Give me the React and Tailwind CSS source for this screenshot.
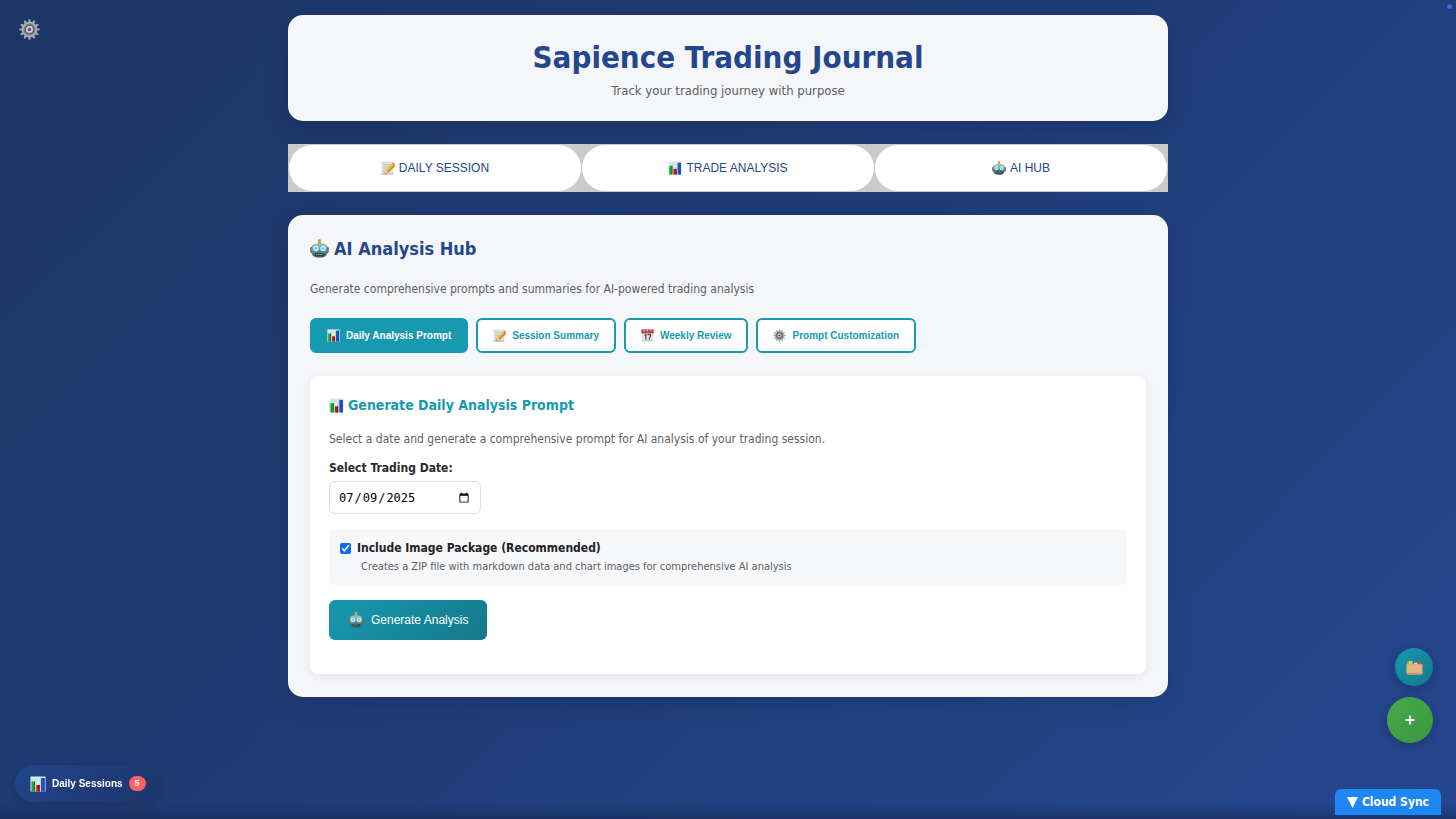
import { useId, useState } from "react";

function ChartIcon({ className }) {
  return (
    <svg viewBox="0 0 32 32" className={className} aria-hidden="true">
      <rect x="1" y="1" width="30" height="30" fill="#dbe8ef" />
      <path d="M1 8h30M1 16h30M1 24h30M11 1v30M21 1v30" stroke="#b9cbd6" strokeWidth="1" />
      <rect x="3" y="11" width="7" height="20" fill="#17a82c" />
      <rect x="8" y="11" width="2" height="20" fill="#0d7a1d" />
      <rect x="12.500" y="18" width="7" height="13" fill="#c4161c" />
      <rect x="17.500" y="18" width="2" height="13" fill="#8e0d12" />
      <rect x="22" y="4" width="7" height="27" fill="#1b55c4" />
      <rect x="27" y="4" width="2" height="27" fill="#123c90" />
    </svg>
  );
}

function MemoIcon({ className }) {
  return (
    <svg viewBox="0 0 32 32" className={className} aria-hidden="true">
      <path d="M1 1h27v30H1z" fill="#e3e3e3" />
      <path d="M1 28h27v3H1z" fill="#bdbdbd" />
      <path d="M5 8h17M5 12h13M5 16h10M5 20h8M5 24h14" stroke="#a9adb3" strokeWidth="1.200" />
      <path d="M8 29l3-9L25 6l6 6-15 15z" fill="#f4b92c" />
      <path d="M13 26L29 9l3 3-16 15z" fill="#c98613" />
      <path d="M25 6l2-2c2-1 6 2 5 4l-1 4z" fill="#e58a86" />
      <path d="M8 29l3-9 5 7z" fill="#ecd0a0" />
      <path d="M8 29l1-3 2 2z" fill="#3b3028" />
    </svg>
  );
}

function RobotIcon({ className }) {
  const id = useId();
  return (
    <svg viewBox="0 0 32 32" className={className} aria-hidden="true">
      <defs>
        <linearGradient id={id} x1="0" y1="0" x2="0" y2="1">
          <stop offset="0" stopColor="#9bcaca" />
          <stop offset="0.500" stopColor="#549aa0" />
          <stop offset="1" stopColor="#2c5661" />
        </linearGradient>
      </defs>
      <rect x="0.500" y="13" width="5" height="11" rx="2.500" fill="#a5403c" />
      <rect x="26.500" y="13" width="5" height="11" rx="2.500" fill="#a5403c" />
      <path d="M14 4h4l1 5h-6z" fill="#6fa3a6" />
      <circle cx="16" cy="3.200" r="3" fill="#f09a2a" />
      <path d="M3 13c1-5 7-6 13-6s12 1 13 6c1 6 1 13-3 16-4 3-16 3-20 0-4-3-4-10-3-16z" fill={`url(#${id})`} />
      <circle cx="10" cy="16" r="4.500" fill="#c9f4fa" />
      <circle cx="22" cy="16" r="4.500" fill="#c9f4fa" />
      <circle cx="10" cy="16" r="2.300" fill="#62cbe0" />
      <circle cx="22" cy="16" r="2.300" fill="#62cbe0" />
      <path d="M16 18l2.500 4h-5z" fill="#c2503f" />
      <rect x="8" y="24" width="16" height="4" rx="2" fill="#263d45" />
      <path d="M10 26h12" stroke="#9fb9bd" strokeWidth="1.500" strokeDasharray="2 1" />
    </svg>
  );
}

const teeth = [0, 30, 60, 90, 120, 150, 180, 210, 240, 270, 300, 330];

function GearIcon({ className }) {
  return (
    <svg viewBox="0 0 32 32" className={className} aria-hidden="true">
      {teeth.map((a) => (
        <path key={a} d="M14 5l.8-4.500h2.400L18 5z" fill="#a9adb1" transform={`rotate(${a} 16 16)`} />
      ))}
      <circle cx="16" cy="16" r="10.500" fill="#77797c" stroke="#a9adb1" strokeWidth="3" />
      <circle cx="16" cy="16" r="7" fill="#606266" />
      <circle cx="16" cy="16" r="4" fill="#55585c" stroke="#cfd2d5" strokeWidth="2.500" />
    </svg>
  );
}

function CalendarIcon({ className }) {
  return (
    <svg viewBox="0 0 32 32" className={className} aria-hidden="true">
      <path d="M2 2h28v28H2z" fill="#e4e4e2" />
      <path d="M1 1h30v10H1z" fill="#b9433f" />
      <path d="M6 1v4l3 2V1zM14 1v4l3 2V1zM23 1v4l3 2V1z" fill="#e7b5b1" />
      <path d="M2 28h28v2H2z" fill="#b5b5b3" />
      <path d="M9 16l3-2v12M16 14h8l-4 12" fill="none" stroke="#33363a" strokeWidth="2.500" />
    </svg>
  );
}

function FolderIcon({ className }) {
  return (
    <svg viewBox="0 0 32 32" className={className} aria-hidden="true">
      <path d="M2 6l2-2h8l2 3h14v6H2z" fill="#c89a63" />
      <path d="M6 4h7v5H6z" fill="#ecd23c" />
      <path d="M12 5h8v5h-8z" fill="#3e74c7" />
      <path d="M15 7h6v3h-6z" fill="#f1eee8" />
      <path d="M21 6h8v5h-8z" fill="#d4493f" />
      <path d="M1 10h13l3-2 3 2h11v17c0 1-1 2-2 2H3c-1 0-2-1-2-2z" fill="#e3b580" />
      <path d="M1 26h30v1c0 1-1 2-2 2H3c-1 0-2-1-2-2z" fill="#cb9a63" />
    </svg>
  );
}

const navItems = [
  { label: "DAILY SESSION", Icon: MemoIcon },
  { label: "TRADE ANALYSIS", Icon: ChartIcon },
  { label: "AI HUB", Icon: RobotIcon },
];

const tabs = [
  { label: "Daily Analysis Prompt", Icon: ChartIcon },
  { label: "Session Summary", Icon: MemoIcon },
  { label: "Weekly Review", Icon: CalendarIcon },
  { label: "Prompt Customization", Icon: GearIcon },
];

const activeTab = "rounded-md border-2 border-[#1799b0] bg-[#1799b0] text-white";
const idleTab = "rounded-md border-2 border-[#1799b0] bg-white text-[#1799b0]";

export default function App() {
  const [tab, setTab] = useState(tabs[0].label);
  const [date, setDate] = useState("2025-07-09");
  const [withImages, setWithImages] = useState(true);

  return (
    <div className="min-h-screen bg-linear-135 from-[#1c3666] via-[#1f3c76] to-[#254790] font-['DejaVu_Sans_Condensed','DejaVu_Sans',sans-serif] text-[#333]">
      <div className="mx-auto flex w-full max-w-[880px] flex-col gap-[23px] py-[15px]">
        <header className="rounded-[15px] bg-[#f4f6fa] px-6 pt-[22px] pb-[21px] text-center shadow-[0_6px_24px_rgba(0,0,0,0.12)]">
          <h1 className="text-[31px] leading-[40px] font-bold text-[#24468c]">Sapience Trading Journal</h1>
          <p className="mt-1 text-[13px] leading-[19px] text-[#606060]">Track your trading journey with purpose</p>
        </header>

        <nav className="grid grid-cols-3 gap-px bg-[#cbcbcb] p-px">
          {navItems.map(({ label, Icon }) => (
            <button
              key={label}
              type="button"
              className="flex h-[46px] items-center justify-center gap-1 rounded-[23px] bg-white font-['Liberation_Sans',Arial,sans-serif] text-[12px] text-[#24468c]"
            >
              <Icon className="size-[14px]" />
              {label}
            </button>
          ))}
        </nav>

        <main className="rounded-[15px] bg-[#f4f6fa] px-[22px] pt-[21px] pb-[23px] shadow-[0_6px_24px_rgba(0,0,0,0.12)]">
          <h2 className="flex items-center gap-[5px] text-[18px] leading-[25px] font-bold text-[#24468c]">
            <RobotIcon className="size-[19px]" />
            AI Analysis Hub
          </h2>
          <p className="mt-[18px] text-[12px] leading-[20px] text-[#606060]">
            Generate comprehensive prompts and summaries for AI-powered trading analysis
          </p>

          <div className="mt-[19px] flex flex-wrap gap-2">
            {tabs.map(({ label, Icon }) => (
              <button key={label} type="button" onClick={() => setTab(label)} className={tab === label ? activeTab : idleTab}>
                <span className="flex h-[31px] items-center gap-[6px] px-[15px] font-['Liberation_Sans',Arial,sans-serif] text-[10px] font-bold">
                  <Icon className="size-[13px]" />
                  {label}
                </span>
              </button>
            ))}
          </div>

          <section className="mt-[23px] rounded-lg bg-white px-[19px] pt-[17px] pb-[34px] shadow-[0_2px_8px_rgba(0,0,0,0.08)]">
            <h3 className="flex items-center gap-1 text-[14px] leading-[24px] font-bold text-[#1799b0]">
              <ChartIcon className="size-[15px]" />
              Generate Daily Analysis Prompt
            </h3>
            <p className="mt-[12px] text-[12px] leading-[20px] text-[#606060]">
              Select a date and generate a comprehensive prompt for AI analysis of your trading session.
            </p>
            <label htmlFor="trading-date" className="mt-[10px] block text-[12px] leading-[18px] font-bold text-[#2a2a2a]">
              Select Trading Date:
            </label>
            <input
              id="trading-date"
              type="date"
              value={date}
              onChange={(e) => setDate(e.target.value)}
              className="mt-1 block h-[33px] w-[152px] rounded-md border border-[#dcdcdc] bg-white px-2 font-['DejaVu_Sans_Mono',monospace] text-[12px] text-black"
            />

            <div className="mt-[15px] rounded-md bg-[#f7f8fa] px-[11px] py-[9px]">
              <div className="flex items-center gap-[6px]">
                <input
                  id="image-package"
                  type="checkbox"
                  checked={withImages}
                  onChange={(e) => setWithImages(e.target.checked)}
                  className="size-[11px] accent-[#0b6ff5]"
                />
                <label htmlFor="image-package" className="text-[12px] leading-[20px] font-bold text-[#222]">
                  Include Image Package (Recommended)
                </label>
              </div>
              <p className="pl-[21px] text-[11px] leading-[18px] text-[#606060]">
                Creates a ZIP file with markdown data and chart images for comprehensive AI analysis
              </p>
            </div>

            <button
              type="button"
              className="mt-[15px] flex h-[40px] items-center gap-[7px] rounded-md bg-linear-135 from-[#1799b0] to-[#14788a] px-[19px] font-['Liberation_Sans',Arial,sans-serif] text-[12px] text-white"
            >
              <RobotIcon className="size-[16px]" />
              Generate Analysis
            </button>
          </section>
        </main>
      </div>

      <button type="button" aria-label="Settings" className="fixed top-[19px] left-[19px]">
        <GearIcon className="size-[21px]" />
      </button>

      <span className="fixed top-[4px] right-[4px] size-[5px] rounded-full bg-[#6257e0]" />

      <button
        type="button"
        className="fixed bottom-[17px] left-[15px] flex h-[37px] items-center gap-[6px] rounded-full bg-linear-135 from-[#22458c] to-[#1c3569] px-[15px] font-['Liberation_Sans',Arial,sans-serif] text-[10px] font-bold text-white shadow-[0_3px_12px_rgba(0,0,0,0.15)]"
      >
        <ChartIcon className="size-[16px]" />
        Daily Sessions
        <span className="flex h-[15px] items-center rounded-full bg-[#fb6163] px-[6px] text-[9px]">5</span>
      </button>

      <div className="fixed right-[23px] bottom-[76px] flex flex-col items-end gap-[11px]">
        <button
          type="button"
          aria-label="Open files"
          className="flex size-[38px] items-center justify-center rounded-full bg-linear-135 from-[#1799b0] to-[#14788a] shadow-[0_3px_12px_rgba(0,0,0,0.2)]"
        >
          <FolderIcon className="size-[17px]" />
        </button>
        <button
          type="button"
          aria-label="Add entry"
          className="flex size-[46px] items-center justify-center rounded-full bg-linear-135 from-[#48a94c] to-[#3a983f] shadow-[0_3px_12px_rgba(0,0,0,0.2)]"
        >
          <svg viewBox="0 0 10 10" className="size-[10px]" aria-hidden="true">
            <path d="M5 0.500v9M0.500 5h9" stroke="#fff" strokeWidth="1.800" />
          </svg>
        </button>
      </div>

      <div className="pointer-events-none fixed inset-x-0 bottom-0 h-[14px] bg-linear-to-b from-transparent to-[#182e5e]/70" />

      <button
        type="button"
        className="fixed right-[15px] bottom-[4px] flex h-[26px] items-center gap-1 rounded-t-md bg-[#1f87f3] px-[12px] text-[12px] font-bold text-white"
      >
        <svg viewBox="0 0 11 11" className="size-[11px]" aria-hidden="true">
          <path d="M0 0h11L5.500 11z" fill="#fff" />
        </svg>
        Cloud Sync
      </button>
    </div>
  );
}
